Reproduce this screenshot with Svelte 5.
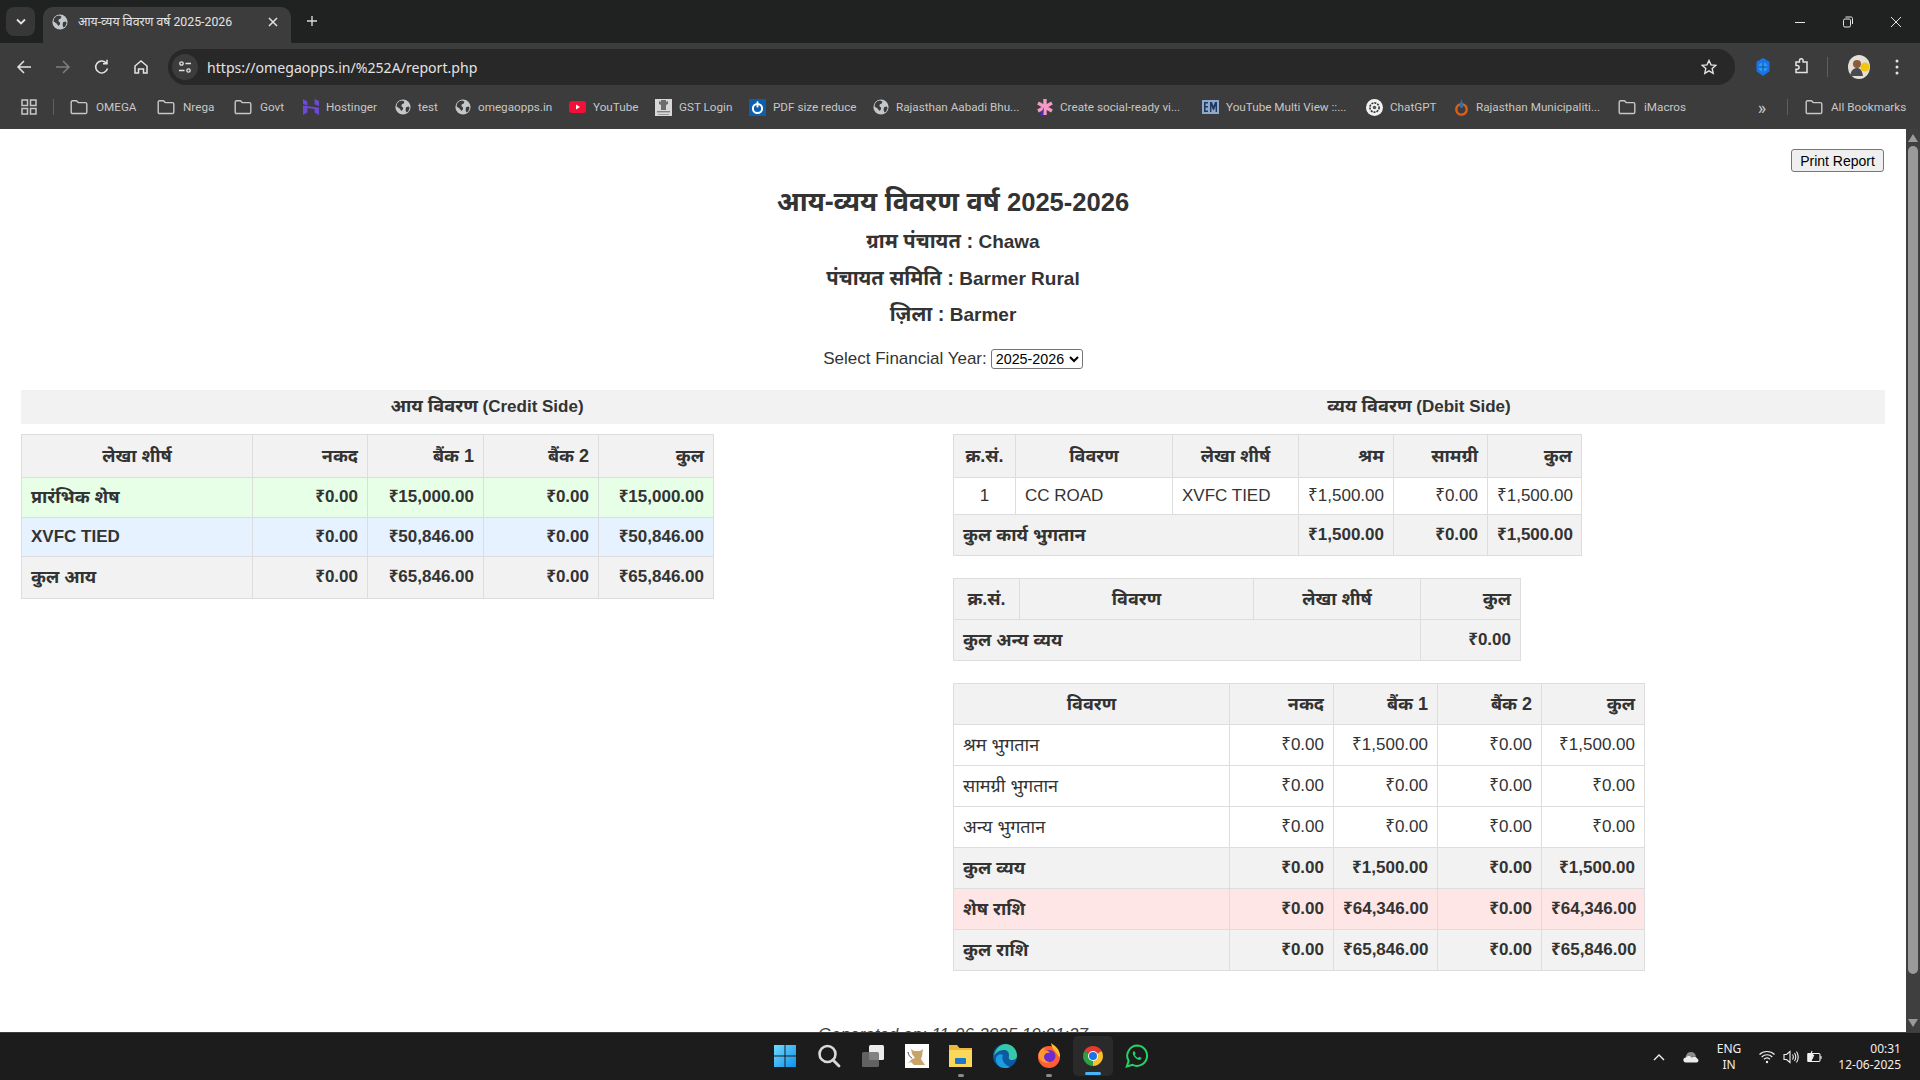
<script>
    // step = distance from this bookmark's icon to the next one
    const bookmarks = [
        { label: 'OMEGA', icon: 'folder', step: 87 },
        { label: 'Nrega', icon: 'folder', step: 77 },
        { label: 'Govt', icon: 'folder', step: 69 },
        { label: 'Hostinger', icon: 'hostinger', step: 92 },
        { label: 'test', icon: 'globe', step: 60 },
        { label: 'omegaopps.in', icon: 'globe', step: 114 },
        { label: 'YouTube', icon: 'youtube', step: 86 },
        { label: 'GST Login', icon: 'gst', step: 94 },
        { label: 'PDF size reduce', icon: 'pdf', step: 124 },
        { label: 'Rajasthan Aabadi Bhu...', icon: 'globe', step: 164 },
        { label: 'Create social-ready vi...', icon: 'create', step: 165 },
        { label: 'YouTube Multi View ::...', icon: 'multi', step: 164 },
        { label: 'ChatGPT', icon: 'chatgpt', step: 88 },
        { label: 'Rajasthan Municipaliti...', icon: 'raj', step: 164 },
        { label: 'iMacros', icon: 'folder', step: 100 }
    ];

    const credit = [
        { name: 'प्रारंभिक शेष', cls: 'green h40', vals: ['₹0.00', '₹15,000.00', '₹0.00', '₹15,000.00'] },
        { name: 'XVFC TIED', en: true, cls: 'blue h39', vals: ['₹0.00', '₹50,846.00', '₹0.00', '₹50,846.00'] },
        { name: 'कुल आय', cls: 'grey h42', vals: ['₹0.00', '₹65,846.00', '₹0.00', '₹65,846.00'] }
    ];

    const summary = [
        { name: 'श्रम भुगतान', cls: '', vals: ['₹0.00', '₹1,500.00', '₹0.00', '₹1,500.00'] },
        { name: 'सामग्री भुगतान', cls: '', vals: ['₹0.00', '₹0.00', '₹0.00', '₹0.00'] },
        { name: 'अन्य भुगतान', cls: '', vals: ['₹0.00', '₹0.00', '₹0.00', '₹0.00'] },
        { name: 'कुल व्यय', cls: 'grey strong', vals: ['₹0.00', '₹1,500.00', '₹0.00', '₹1,500.00'] },
        { name: 'शेष राशि', cls: 'pink strong', vals: ['₹0.00', '₹64,346.00', '₹0.00', '₹64,346.00'] },
        { name: 'कुल राशि', cls: 'grey strong', vals: ['₹0.00', '₹65,846.00', '₹0.00', '₹65,846.00'] }
    ];
</script>

{#snippet globe()}
    <svg width="16" height="16" viewBox="0 0 16 16">
        <circle cx="8" cy="8" r="7.6" fill="#c4c7c9" />
        <path d="M4.2 2.2 7 1.4l2.4 1.2-.6 2-2 .6-.4 2 1.6 1.2v1.800L6.400 12 4.600 9.600 1.600 7.400l.4-2.600zM11 8.200l2.800-.6.8 1.400-1.400 3.400-1.800 1.200-.8-2.600z" fill="#3b3b3b" />
    </svg>
{/snippet}

{#snippet bookmarkIcon(name)}
    {#if name === 'folder'}
        <svg class="folder" width="18" height="16" viewBox="0 0 18 16" fill="none" stroke="#c7c7c7" stroke-width="1.4">
            <path d="M1.200 3.200c0-.8.5-1.400 1.300-1.400h4l1.700 1.800h7.200c.8 0 1.400.6 1.400 1.400v8.200c0 .8-.6 1.300-1.400 1.300H2.500c-.8 0-1.300-.5-1.300-1.300z" />
        </svg>
    {:else if name === 'globe'}
        {@render globe()}
    {:else if name === 'hostinger'}
        <svg width="16" height="16" viewBox="0 0 16 16" fill="#6d4ad6">
            <path d="M0 0l4.400 2.400v4.200L0 5zM11.600 0L16 2v5l-4.400-1.600zM0 6.400l16 2.400V16l-4.400-2.400V10L4.400 9v4.600L0 16z" />
        </svg>
    {:else if name === 'youtube'}
        <svg width="17" height="16" viewBox="0 0 17 16">
            <rect x="0" y="2" width="17" height="12" rx="3" fill="#f40f36" />
            <path d="M7 5.600 11 8l-4 2.400z" fill="#fff" />
        </svg>
    {:else if name === 'gst'}
        <svg width="17" height="17" viewBox="0 0 17 17">
            <rect width="17" height="17" fill="#d8d8d8" />
            <path d="M6 1h5v2l2-1v3l-2 1v5H6V6L4 5V2l2 1z" fill="#6d6d6d" />
            <rect x="2" y="12" width="13" height="1.400" fill="#808080" />
            <rect x="3" y="15" width="11" height="1" fill="#9a9a9a" />
        </svg>
    {:else if name === 'pdf'}
        <svg width="17" height="17" viewBox="0 0 17 17">
            <rect width="17" height="17" fill="#0b5fb0" />
            <circle cx="8.500" cy="9.500" r="4.600" fill="none" stroke="#fff" stroke-width="2" />
            <rect x="7.600" y="2.400" width="1.800" height="6" fill="#fff" />
        </svg>
    {:else if name === 'create'}
        <svg width="16" height="18" viewBox="0 0 16 18">
            <g stroke="#f59ac4" stroke-width="3.400">
                <path d="M8 1v16M1 5l14 8M15 5 1 13" />
            </g>
            <path d="M7 9 3 17l3 .4z" fill="#4a2bc7" />
        </svg>
    {:else if name === 'multi'}
        <svg width="17" height="14" viewBox="0 0 17 14">
            <rect width="17" height="14" fill="#8fa9c9" />
            <path d="M2 2h4v1.600H3.600v2.400H6v1.600H3.600v3H6V12H2zM8 12V2h2l1.400 4L13 2h2v10h-1.400V6L12 10h-1L9.400 6v6z" fill="#203a63" />
        </svg>
    {:else if name === 'chatgpt'}
        <svg width="17" height="17" viewBox="0 0 17 17">
            <circle cx="8.500" cy="8.500" r="8.500" fill="#f1f1f1" />
            <circle cx="8.500" cy="8.500" r="4.600" fill="none" stroke="#333" stroke-width="1.600" stroke-dasharray="2 1" />
            <circle cx="8.500" cy="8.500" r="1.800" fill="#555" />
        </svg>
    {:else if name === 'raj'}
        <svg width="15" height="18" viewBox="0 0 15 18">
            <circle cx="7.500" cy="11.400" r="5.200" fill="none" stroke="#d9601a" stroke-width="2.400" />
            <path d="M7.500 1c1 3 1.600 5 1.600 7.400 0 1-.8 1.600-1.600 1.600s-1.600-.6-1.600-1.600C5.900 6 6.500 4 7.500 1z" fill="#2d6fb3" />
        </svg>
    {/if}
{/snippet}

<div class="screen">
    <header class="titlebar">
        <div class="tablist">
            <svg width="12" height="8" viewBox="0 0 12 8" fill="none" stroke="#e3e3e3" stroke-width="1.800"><path d="M2 1.500 6 5.500l4-4" /></svg>
        </div>
        <div class="tab">
            {@render globe()}
            <span class="tab-title">आय-व्यय विवरण वर्ष 2025-2026</span>
            <svg class="tab-close" width="10" height="10" viewBox="0 0 10 10" stroke="#e3e3e3" stroke-width="1.500"><path d="M1 1l8 8M9 1l-8 8" /></svg>
        </div>
        <svg class="newtab" width="12" height="12" viewBox="0 0 12 12" stroke="#d8d8d8" stroke-width="1.400"><path d="M6 1v10M1 6h10" /></svg>
        <div class="winctl">
            <svg width="12" height="12" viewBox="0 0 12 12" stroke="#e6e6e6"><path d="M1 6.500h10" /></svg>
            <svg width="12" height="12" viewBox="0 0 12 12" fill="none" stroke="#e6e6e6"><rect x="1.500" y="3" width="7" height="8" rx="1.500" /><path d="M3.500 1h5.500c1 0 1.500.5 1.500 1.500V8" /></svg>
            <svg width="12" height="12" viewBox="0 0 12 12" stroke="#e6e6e6"><path d="M1 1l10 10M11 1 1 11" /></svg>
        </div>
    </header>

    <div class="toolbar">
        <div class="nav">
            <svg width="16" height="16" viewBox="0 0 16 16" fill="none" stroke="#e3e3e3" stroke-width="1.500"><path d="M15 8H2M8 2 2 8l6 6" /></svg>
            <svg width="16" height="16" viewBox="0 0 16 16" fill="none" stroke="#7e7e7e" stroke-width="1.500"><path d="M1 8h13M8 2l6 6-6 6" /></svg>
            <svg width="16" height="16" viewBox="0 0 16 16" fill="none" stroke="#e3e3e3" stroke-width="1.500"><path d="M13.500 9.500A6 6 0 1 1 12 3.800M13 .8v4H9" /></svg>
            <svg width="16" height="16" viewBox="0 0 16 16" fill="none" stroke="#e3e3e3" stroke-width="1.500"><path d="M2 7 8 2l6 5v7h-3.500v-4h-5v4H2z" /></svg>
        </div>
        <div class="address">
            <span class="siteinfo">
                <svg width="14" height="14" viewBox="0 0 14 14" fill="none" stroke="#e3e3e3" stroke-width="1.300"><circle cx="3.500" cy="3.500" r="1.700" /><path d="M7.500 3.500h5.500M1 10.500h5.500" /><circle cx="10.500" cy="10.500" r="1.700" /></svg>
            </span>
            <span class="url">https://omegaopps.in/%252A/report.php</span>
            <svg class="star" width="16" height="16" viewBox="0 0 16 16" fill="none" stroke="#e3e3e3" stroke-width="1.400"><path d="M8 1.500l2 4.400 4.700.5-3.500 3.200 1 4.700L8 11.900l-4.200 2.400 1-4.700L1.300 6.400 6 5.900z" /></svg>
        </div>
        <div class="actions">
            <svg width="16" height="18" viewBox="0 0 16 18"><path d="M8 0l6.500 3.700v9.600L8 18l-6.500-4.700V3.700z" fill="#1a73e8" /><circle cx="8" cy="9" r="4.500" fill="#2f9bf0" /><path d="M3.500 9h9M8 4.500v9" stroke="#0e4fa8" /></svg>
            <svg class="puzzle" width="17" height="18" viewBox="0 0 17 18" fill="none" stroke="#e3e3e3" stroke-width="1.500"><path d="M3 4h3.500V2.500a1.800 1.800 0 0 1 3.600 0V4H14v10.500H3v-3.300h1.200a1.900 1.900 0 0 0 0-3.800H3z" /></svg>
            <span class="vsep"></span>
            <svg class="avatar" width="22" height="24" viewBox="0 0 22 24"><ellipse cx="11" cy="12" rx="11" ry="12" fill="#e4e0d8" /><circle cx="9" cy="9" r="4" fill="#8a5b3c" /><path d="M2 21c1-6 4-8 7-8s5 2 6 8z" fill="#4a4a52" /><circle cx="17" cy="12" r="4.500" fill="#f2c511" /></svg>
            <svg class="dots" width="4" height="16" viewBox="0 0 4 16" fill="#e3e3e3"><circle cx="2" cy="2" r="1.500" /><circle cx="2" cy="8" r="1.500" /><circle cx="2" cy="14" r="1.500" /></svg>
        </div>
    </div>

    <nav class="bookmarks">
        <svg class="apps" width="16" height="16" viewBox="0 0 16 16" fill="none" stroke="#c7c7c7" stroke-width="1.500"><rect x="1" y="1" width="5.500" height="5.500" /><rect x="9.500" y="1" width="5.500" height="5.500" /><rect x="1" y="9.500" width="5.500" height="5.500" /><rect x="9.500" y="9.500" width="5.500" height="5.500" /></svg>
        <span class="bm-sep"></span>
        {#each bookmarks as b}
            <span class="bm" style="width: {b.step}px">
                {@render bookmarkIcon(b.icon)}
                <span>{b.label}</span>
            </span>
        {/each}
        <span class="more">»</span>
        <span class="bm-sep"></span>
        <span class="bm">
            {@render bookmarkIcon('folder')}
            <span>All Bookmarks</span>
        </span>
    </nav>

    <div class="viewport">
        <main class="page">
            <button class="print">Print Report</button>
            <h1><span class="hi">आय-व्यय विवरण वर्ष</span> 2025-2026</h1>
            <h2><span class="hi">ग्राम पंचायत :</span> Chawa</h2>
            <h2><span class="hi">पंचायत समिति :</span> Barmer Rural</h2>
            <h2><span class="hi">ज़िला :</span> Barmer</h2>
            <div class="year">
                <label for="year">Select Financial Year:</label>
                <select id="year">
                    <option>2025-2026</option>
                    <option>2024-2025</option>
                </select>
            </div>

            <div class="sides">
                <section>
                    <h3><span class="hi">आय विवरण</span> (Credit Side)</h3>
                    <table class="t-credit">
                        <colgroup><col /><col /><col /><col /><col /></colgroup>
                        <thead>
                            <tr class="h43">
                                <th class="c">लेखा शीर्ष</th><th>नकद</th><th>बैंक 1</th><th>बैंक 2</th><th>कुल</th>
                            </tr>
                        </thead>
                        <tbody>
                            {#each credit as row}
                                <tr class="strong {row.cls}">
                                    <td class="l" class:en={row.en}>{row.name}</td>
                                    {#each row.vals as v}<td>{v}</td>{/each}
                                </tr>
                            {/each}
                        </tbody>
                    </table>
                </section>

                <section>
                    <h3><span class="hi">व्यय विवरण</span> (Debit Side)</h3>
                    <table class="t-work">
                        <colgroup><col /><col /><col /><col /><col /><col /></colgroup>
                        <thead>
                            <tr class="h43">
                                <th class="c">क्र.सं.</th><th class="c">विवरण</th><th class="c">लेखा शीर्ष</th><th>श्रम</th><th>सामग्री</th><th>कुल</th>
                            </tr>
                        </thead>
                        <tbody>
                            <tr class="h38">
                                <td class="c">1</td><td class="l en">CC ROAD</td><td class="l en">XVFC TIED</td><td>₹1,500.00</td><td>₹0.00</td><td>₹1,500.00</td>
                            </tr>
                            <tr class="strong grey h41">
                                <td class="l" colspan="3">कुल कार्य भुगतान</td><td>₹1,500.00</td><td>₹0.00</td><td>₹1,500.00</td>
                            </tr>
                        </tbody>
                    </table>

                    <table class="t-other">
                        <colgroup><col /><col /><col /><col /></colgroup>
                        <thead>
                            <tr class="h41">
                                <th class="c">क्र.सं.</th><th class="c">विवरण</th><th class="c">लेखा शीर्ष</th><th>कुल</th>
                            </tr>
                        </thead>
                        <tbody>
                            <tr class="strong grey h41">
                                <td class="l" colspan="3">कुल अन्य व्यय</td><td>₹0.00</td>
                            </tr>
                        </tbody>
                    </table>

                    <table class="t-summary">
                        <colgroup><col /><col /><col /><col /><col /></colgroup>
                        <thead>
                            <tr class="h41">
                                <th class="c">विवरण</th><th>नकद</th><th>बैंक 1</th><th>बैंक 2</th><th>कुल</th>
                            </tr>
                        </thead>
                        <tbody>
                            {#each summary as row}
                                <tr class="h41 {row.cls}">
                                    <td class="l">{row.name}</td>
                                    {#each row.vals as v}<td>{v}</td>{/each}
                                </tr>
                            {/each}
                        </tbody>
                    </table>
                </section>
            </div>

            <p class="generated">Generated on: 11-06-2025 19:01:27</p>
        </main>

        <div class="scrollbar">
            <svg width="14" height="10" viewBox="0 0 14 10"><path d="M7 1l5 8H2z" fill="#9a9a9a" /></svg>
            <div class="thumb"></div>
            <svg width="14" height="10" viewBox="0 0 14 10"><path d="M7 9 2 1h10z" fill="#9a9a9a" /></svg>
        </div>
    </div>

    <footer class="taskbar">
        <div></div>
        <div class="tasks">
            <span class="task">
                <svg width="24" height="24" viewBox="0 0 24 24">
                    <defs><linearGradient id="win" x1="0" y1="0" x2="1" y2="1"><stop offset="0" stop-color="#6fdcff" /><stop offset="1" stop-color="#0f8fe8" /></linearGradient></defs>
                    <path d="M1 1h10.500v10.500H1zM12.500 1H23v10.500H12.500zM1 12.500h10.500V23H1zM12.500 12.500H23V23H12.500z" fill="url(#win)" />
                </svg>
            </span>
            <span class="task">
                <svg width="24" height="24" viewBox="0 0 24 24" fill="none" stroke="#d9d9d9"><circle cx="10.500" cy="10" r="8" stroke-width="2.600" /><path d="M16 16l6 6" stroke-width="2.800" stroke-linecap="round" /></svg>
            </span>
            <span class="task">
                <svg width="24" height="24" viewBox="0 0 24 24"><rect x="8" y="1" width="15" height="15" rx="1.500" fill="#ececec" /><rect x="1" y="8" width="17" height="15" rx="1.500" fill="#6e6e6e" fill-opacity=".85" /></svg>
            </span>
            <span class="task">
                <svg width="24" height="24" viewBox="0 0 24 24"><rect width="24" height="24" fill="#fff" /><path d="M6 5l3 2h6l3-2-1 7-1 3 4 6H9l-3-3-3 1 4-4 3-1-3-4z" fill="#c9a46a" /><path d="M3 8c1 4 2 5 4 6" stroke="#444" fill="none" /></svg>
            </span>
            <span class="task">
                <svg width="25" height="24" viewBox="0 0 25 24"><path d="M1 1h8l2.500 3H24v19H1z" fill="#e8b93a" /><path d="M1 6h23v17H1z" fill="#fbd75b" /><rect x="7" y="14" width="11" height="6" rx="1" fill="#1d78c9" /></svg>
            </span>
            <span class="task">
                <svg width="24" height="24" viewBox="0 0 24 24">
                    <circle cx="12" cy="12" r="12" fill="#0c59a4" />
                    <path d="M1 12C2 5 7 0 12.500 0 19 0 24 5 24 12c0 3-3 4.500-6 4-3-.5-2-3-2-5 0-3-2-5-5-5-4 0-8 2-10 6z" fill="#36c9a5" />
                    <path d="M10 11c-2 4 1 10 7 12-2 1-4 1-5 1C6 24 2 19 3 14c1-3 4-5 7-3z" fill="#1b9de2" />
                </svg>
            </span>
            <span class="task">
                <svg width="24" height="25" viewBox="0 0 24 25">
                    <circle cx="12" cy="14" r="11" fill="#ff5e35" />
                    <path d="M14 0c4 3 9 6 9 13 0 2-2 0-3-2-2-3-5-5-6-11z" fill="#ffbd2e" />
                    <circle cx="12.500" cy="13" r="6" fill="#6a2bd0" />
                    <path d="M1.500 11C3 7 5 5 8 5l-1 3c2-1 5 0 6 2-3-1-6 1-6 4s3 5 6 5c-4 2-9 0-11-4z" fill="#ff9a2e" />
                </svg>
            </span>
            <span class="task active">
                <svg width="24" height="24" viewBox="0 0 48 48">
                    <path d="M24 24 6.700 14A20 20 0 0 1 41.300 14z" fill="#e33b2e" />
                    <path d="M24 24 41.300 14A20 20 0 0 1 24 44z" fill="#fbc02d" />
                    <path d="M24 24 24 44A20 20 0 0 1 6.700 14z" fill="#2f9e44" />
                    <circle cx="24" cy="24" r="10" fill="#fff" />
                    <circle cx="24" cy="24" r="8" fill="#1a73e8" />
                </svg>
            </span>
            <span class="task">
                <svg width="24" height="24" viewBox="0 0 24 24">
                    <path d="M12.500 1.500a10.200 10.200 0 0 0-8.800 15.400L1.800 22.500l5.700-1.600a10.200 10.200 0 1 0 5-19.400z" fill="none" stroke="#25d366" stroke-width="2" />
                    <path d="M8.500 7.500c-.8.800-1 2 0 4 .9 1.800 2.400 3.200 4.200 4 1.700.7 2.800.4 3.500-.4.4-.5.4-1 .2-1.300l-1.800-.9c-.3-.1-.5 0-.7.200l-.5.600c-.2.200-.4.200-.6.100a6.500 6.500 0 0 1-2.900-2.600c-.1-.2-.1-.4.100-.6l.4-.5c.2-.2.2-.4.100-.6l-.7-1.700c-.2-.5-.8-.6-1.300-.3z" fill="#25d366" />
                </svg>
            </span>
        </div>
        <div class="tray">
            <svg width="12" height="8" viewBox="0 0 12 8" fill="none" stroke="#f0f0f0" stroke-width="1.400"><path d="M1 7l5-5 5 5" /></svg>
            <svg class="cloud" width="16" height="12" viewBox="0 0 16 12"><path d="M2.500 6.500C3 3 5 1 8 1s4.500 2 5 4.500z" fill="#8d8d8d" /><path d="M3 11.500c-3.500 0-3.500-5 0-5 1.500-2 4-2 5.500 0 2-1 5-1 5.500 1 2 .5 2 4-.5 4z" fill="#ececec" /></svg>
            <span class="lang"><span>ENG</span><span>IN</span></span>
            <svg class="wifi" width="16" height="14" viewBox="0 0 16 14" fill="none" stroke="#f0f0f0" stroke-width="1.200"><path d="M.5 4.500c4-4 11-4 15 0M2.700 7c3-3 7.600-3 10.600 0M5 9.300c1.700-1.500 4.300-1.500 6 0" /><circle cx="8" cy="12" r="1.200" fill="#f0f0f0" stroke="none" /></svg>
            <svg class="vol" width="16" height="14" viewBox="0 0 16 14" fill="none" stroke="#f0f0f0" stroke-width="1.100"><path d="M1 4.500h2.500L7 1.500v11l-3.500-3H1zM9.500 4.500c1 1.500 1 3.500 0 5M11.500 3c1.600 2.500 1.600 5.500 0 8M13.500 1.500c2.200 3.500 2.200 7.500 0 11" /></svg>
            <svg class="batt" width="16" height="14" viewBox="0 0 16 14" fill="none" stroke="#f0f0f0" stroke-width="1.100"><rect x="1" y="3.500" width="12" height="8" rx="1.200" /><path d="M14 6v3" /><path d="M1 3.500h5l-2 8H1z" fill="#f0f0f0" /><path d="M5 1 3.500 5.500h3L5 9" /></svg>
            <span class="clock"><span>00:31</span><span>12-06-2025</span></span>
        </div>
    </footer>
</div>

<style>
    :global(body) {
        margin: 0;
    }

    .screen {
        width: 1920px;
        height: 100vh;
        display: flex;
        flex-direction: column;
        overflow: hidden;
        font-family: "Liberation Sans", "Noto Sans", sans-serif;
    }

    /* browser chrome */
    .titlebar {
        height: 43px;
        flex: none;
        background: #202221;
        display: flex;
        align-items: flex-end;
        position: relative;
    }

    .tablist {
        width: 29px;
        height: 29px;
        margin: 0 8px 7px 6px;
        border-radius: 8px;
        background: #373737;
        display: flex;
        align-items: center;
        justify-content: center;
    }

    .tab {
        width: 248px;
        height: 36px;
        box-sizing: border-box;
        padding: 0 13px 7px 9px;
        background: #3c3c3c;
        border-radius: 10px 10px 0 0;
        display: flex;
        align-items: center;
        gap: 10px;
        color: #e3e3e3;
        font: 12.3px Roboto, "Noto Sans", sans-serif;
    }

    .tab-title {
        flex: 1;
        white-space: nowrap;
    }

    .newtab {
        margin: 0 0 16px 15px;
    }

    .winctl {
        margin-left: auto;
        height: 43px;
        display: flex;
        align-items: center;
        gap: 36px;
        padding-right: 18px;
    }

    .toolbar {
        height: 42px;
        flex: none;
        background: #3c3c3c;
        display: flex;
        align-items: center;
        padding: 6px 0 0 16px;
        box-sizing: border-box;
    }

    .nav {
        display: flex;
        gap: 23px;
        width: 152px;
        flex: none;
    }

    .address {
        width: 1567px;
        height: 36px;
        flex: none;
        box-sizing: border-box;
        padding: 0 18px 0 4px;
        background: #282828;
        border-radius: 18px;
        display: flex;
        align-items: center;
        gap: 9px;
    }

    .siteinfo {
        width: 26px;
        height: 26px;
        border-radius: 50%;
        background: #3c3c3c;
        display: flex;
        align-items: center;
        justify-content: center;
    }

    .url {
        flex: 1;
        color: #e3e3e3;
        font: 14.1px "Noto Sans", sans-serif;
    }

    .actions {
        display: flex;
        align-items: center;
        padding-left: 20px;
    }

    .puzzle {
        margin-left: 22px;
    }

    .vsep {
        width: 1px;
        height: 20px;
        background: #5f5f5f;
        margin: 0 20px 0 17px;
    }

    .dots {
        margin-left: 25px;
    }

    .bookmarks {
        height: 44px;
        flex: none;
        background: #3c3c3c;
        display: flex;
        align-items: center;
        padding-left: 21px;
        color: #c7c7c7;
        font: 11.7px Roboto, sans-serif;
        white-space: nowrap;
    }

    .apps {
        flex: none;
    }

    .bm-sep {
        width: 1px;
        flex: none;
        height: 16px;
        background: #5f5f5f;
        margin: 0 16px;
    }

    .bm {
        flex: none;
        display: flex;
        align-items: center;
        gap: 7px;
    }

    .folder {
        margin-right: 1px;
    }

    .more {
        width: 16px;
        flex: none;
        margin-left: 36px;
        text-align: center;
        font-size: 18px;
    }

    .more + .bm-sep {
        margin: 0 17px;
    }

    /* report page */
    .viewport {
        flex: 1;
        min-height: 0;
        display: flex;
        background: #fff;
    }

    .page {
        flex: 1;
        min-width: 0;
        box-sizing: border-box;
        padding: 57px 21px 0;
        position: relative;
        overflow: hidden;
        color: #333;
        text-align: center;
    }

    .print {
        position: absolute;
        top: 20px;
        right: 22px;
        width: 93px;
        height: 23px;
        padding: 0;
        box-sizing: border-box;
        background: #efefef;
        border: 1px solid #767676;
        border-radius: 3px;
        color: #000;
        font: 14px "Liberation Sans", sans-serif;
    }

    /* hindi runs sit a touch larger, but must not stretch the line box */
    .hi {
        line-height: 0;
    }

    h1 {
        margin: 0;
        font-size: 25.6px;
        line-height: 32px;
    }

    h1 .hi {
        font-size: 1.056em;
    }

    h2 {
        margin: 12px 0;
        font-size: 19px;
        line-height: 24.5px;
    }

    h2 .hi {
        font-size: 1.06em;
    }

    h3 .hi {
        font-size: 1.07em;
    }

    .year {
        margin-top: 21px;
        height: 20px;
        display: flex;
        justify-content: center;
        align-items: center;
        gap: 4px;
        font-size: 17px;
    }

    select {
        width: 92px;
        height: 20px;
        padding: 0;
        box-sizing: border-box;
        background: #fff;
        border: 1px solid #767676;
        border-radius: 3px;
        color: #000;
        font: 14.3px "Liberation Sans", sans-serif;
    }

    .sides {
        margin-top: 21px;
        display: grid;
        grid-template-columns: 932px 932px;
    }

    h3 {
        margin: 0 0 10px;
        height: 34px;
        background: #f2f2f2;
        font-size: 17px;
        line-height: 34px;
    }

    table {
        border-collapse: collapse;
        table-layout: fixed;
        font-size: 17px;
        line-height: 20px;
        margin-bottom: 22px;
    }

    th, td {
        border: 1px solid #ddd;
        padding: 0 9px;
        text-align: right;
        white-space: nowrap;
    }

    th {
        background: #f2f2f2;
        font-size: 18px;
    }

    th.c, td.c {
        text-align: center;
    }

    td.l {
        text-align: left;
        font-size: 18px;
    }

    td.en {
        font-size: 17px;
    }

    .strong td {
        font-weight: bold;
    }

    .green { background: #e6ffe6; }
    .blue { background: #e6f2ff; }
    .grey { background: #f2f2f2; }
    .pink { background: #ffe6e6; }

    .h38 { height: 37.5px; }
    .h39 { height: 39px; }
    .h40 { height: 40px; }
    .h41 { height: 41px; }
    .h42 { height: 42px; }
    .h43 { height: 43px; }

    .t-credit { width: 692px; }
    .t-credit col:nth-child(1) { width: 231px; }
    .t-credit col:nth-child(2) { width: 115px; }
    .t-credit col:nth-child(3) { width: 116px; }
    .t-credit col:nth-child(4) { width: 115px; }
    .t-credit col:nth-child(5) { width: 115px; }

    .t-work { width: 628px; }
    .t-work col:nth-child(1) { width: 62px; }
    .t-work col:nth-child(2) { width: 157px; }
    .t-work col:nth-child(3) { width: 126px; }
    .t-work col:nth-child(4) { width: 95px; }
    .t-work col:nth-child(5) { width: 94px; }
    .t-work col:nth-child(6) { width: 94px; }

    .t-other { width: 567px; }
    .t-other col:nth-child(1) { width: 66px; }
    .t-other col:nth-child(2) { width: 234px; }
    .t-other col:nth-child(3) { width: 167px; }
    .t-other col:nth-child(4) { width: 100px; }

    .t-summary { width: 691px; margin-bottom: 0; }
    .t-summary col:nth-child(1) { width: 276px; }
    .t-summary col:nth-child(2) { width: 104px; }
    .t-summary col:nth-child(3) { width: 104px; }
    .t-summary col:nth-child(4) { width: 104px; }
    .t-summary col:nth-child(5) { width: 103px; }

    .generated {
        margin: 54px 0 0;
        font-size: 17px;
        font-style: italic;
        color: #444;
    }

    .scrollbar {
        width: 14px;
        flex: none;
        background: #3f3f3f;
        display: flex;
        flex-direction: column;
        align-items: center;
        padding: 4px 0;
        box-sizing: border-box;
        gap: 3px;
    }

    .thumb {
        width: 10px;
        flex: none;
        height: 828px;
        border-radius: 5px;
        background: #9a9a9a;
    }

    .scrollbar svg:last-child {
        margin-top: auto;
    }

    /* windows taskbar */
    .taskbar {
        height: 48px;
        flex: none;
        box-sizing: border-box;
        border-top: 1px solid #3d3d3d;
        background: #1c1c1c;
        display: grid;
        grid-template-columns: 1fr auto 1fr;
        align-items: center;
        color: #f0f0f0;
        font: 12px "Noto Sans", sans-serif;
    }

    .tasks {
        display: flex;
        margin: 0 0 2px 1px;
    }

    .task {
        width: 44px;
        height: 40px;
        box-sizing: border-box;
        display: flex;
        align-items: center;
        justify-content: center;
        position: relative;
    }

    .task:nth-child(5)::after, .task:nth-child(7)::after {
        content: '';
        position: absolute;
        bottom: -1px;
        left: 19px;
        width: 6px;
        height: 3px;
        border-radius: 2px;
        background: #8a8a8a;
    }

    .active {
        width: 40px;
        margin: 0 2px;
        background: #2a2a2a;
        border-radius: 5px;
    }

    .active::after {
        content: '';
        position: absolute;
        bottom: 1px;
        left: 12px;
        width: 16px;
        height: 3px;
        border-radius: 2px;
        background: #47b5f5;
    }

    .tray {
        justify-self: end;
        display: flex;
        align-items: center;
        padding-right: 19px;
    }

    .cloud {
        margin-left: 18px;
    }

    .lang {
        width: 40px;
        margin-left: 10px;
        display: flex;
        flex-direction: column;
        align-items: center;
        line-height: 16px;
    }

    .wifi {
        margin-left: 10px;
    }

    .vol {
        margin-left: 8px;
    }

    .batt {
        margin-left: 8px;
    }

    .clock {
        width: 72px;
        margin-left: 6px;
        display: flex;
        flex-direction: column;
        align-items: flex-end;
        line-height: 16px;
    }
</style>
